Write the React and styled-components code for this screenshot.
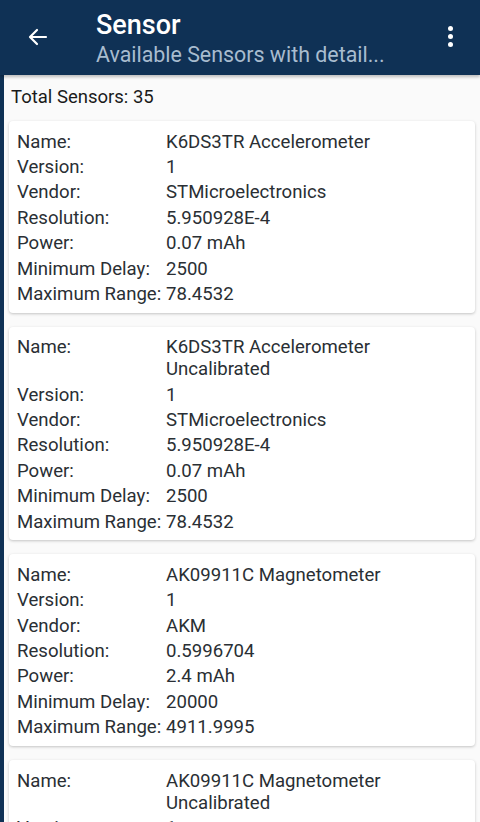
import React from "react";
import styled, { createGlobalStyle } from "styled-components";

const GlobalStyles = createGlobalStyle`
  body {
    margin: 0;
    font-family: Roboto, "Noto Sans", sans-serif;
    background: #fafafa;
  }
`;

const sensors = [
  {
    name: "K6DS3TR Accelerometer",
    version: "1",
    vendor: "STMicroelectronics",
    resolution: "5.950928E-4",
    power: "0.07 mAh",
    minDelay: "2500",
    maxRange: "78.4532",
  },
  {
    name: "K6DS3TR Accelerometer Uncalibrated",
    version: "1",
    vendor: "STMicroelectronics",
    resolution: "5.950928E-4",
    power: "0.07 mAh",
    minDelay: "2500",
    maxRange: "78.4532",
  },
  {
    name: "AK09911C Magnetometer",
    version: "1",
    vendor: "AKM",
    resolution: "0.5996704",
    power: "2.4 mAh",
    minDelay: "20000",
    maxRange: "4911.9995",
  },
  {
    name: "AK09911C Magnetometer Uncalibrated",
    version: "1",
    vendor: "AKM",
    resolution: "0.5996704",
    power: "2.4 mAh",
    minDelay: "20000",
    maxRange: "4911.9995",
  },
];

const fields = [
  ["Name:", "name"],
  ["Version:", "version"],
  ["Vendor:", "vendor"],
  ["Resolution:", "resolution"],
  ["Power:", "power"],
  ["Minimum Delay:", "minDelay"],
  ["Maximum Range:", "maxRange"],
];

function App() {
  return (
    <Page>
      <GlobalStyles />
      <Toolbar>
        <IconButton aria-label="back">
          <svg width="24" height="24" viewBox="0 0 24 24">
            <path
              d="M20 12H4.5M11 5l-7 7 7 7"
              fill="none"
              stroke="#fff"
              strokeWidth="2.2"
              strokeLinecap="round"
              strokeLinejoin="round"
            />
          </svg>
        </IconButton>
        <Titles>
          <Title>Sensor</Title>
          <Subtitle>Available Sensors with detail...</Subtitle>
        </Titles>
        <MenuButton aria-label="more">
          <Dot />
          <Dot />
          <Dot />
        </MenuButton>
      </Toolbar>
      <Body>
        <Total>Total Sensors: 35</Total>
        <List>
          {sensors.map((s, i) => (
            <Card key={i}>
              {fields.map(([label, key]) => (
                <Row key={key}>
                  <Label>{label}</Label>
                  <Value>{s[key]}</Value>
                </Row>
              ))}
            </Card>
          ))}
        </List>
      </Body>
    </Page>
  );
}

export default App;

const Page = styled.div`
  height: 822px;
  overflow: hidden;
  display: flex;
  flex-direction: column;
`;

const Toolbar = styled.header`
  height: 75px;
  flex-shrink: 0;
  background: #0f3155;
  display: flex;
  align-items: center;
  box-shadow: 0 2px 3px rgba(0, 0, 0, 0.25);
  position: relative;
  z-index: 1;
`;

const IconButton = styled.div`
  width: 96px;
  height: 75px;
  display: flex;
  align-items: center;
  padding-left: 26px;
  box-sizing: border-box;
  padding-bottom: 2px;
`;

const Titles = styled.div`
  flex: 1;
  align-self: stretch;
  display: flex;
  flex-direction: column;
  padding-top: 9px;
  white-space: nowrap;
`;

const Title = styled.div`
  color: #fff;
  font-size: 27px;
  font-weight: 500;
  line-height: 32px;
`;

const Subtitle = styled.div`
  color: #a8bccf;
  font-size: 21.4px;
  line-height: 28px;
`;

const MenuButton = styled.div`
  width: 60px;
  height: 75px;
  display: flex;
  flex-direction: column;
  align-items: center;
  justify-content: center;
  gap: 3px;
  padding-left: 1px;
  padding-bottom: 3px;
  box-sizing: border-box;
`;

const Dot = styled.span`
  width: 5px;
  height: 5px;
  border-radius: 50%;
  background: #fff;
`;

const Body = styled.main`
  flex: 1;
  border-left: 4px solid #0f3155;
  background: #fafafa;
  padding: 0 5px 0 5px;
`;

const Total = styled.div`
  font-size: 18.5px;
  color: #1a1a1a;
  padding: 10px 0 0 2px;
  line-height: 24px;
  height: 36px;
`;

const List = styled.div`
  display: flex;
  flex-direction: column;
  gap: 14px;
`;

const Card = styled.section`
  background: #fff;
  border-radius: 4px;
  box-shadow: 0 1px 3px rgba(0, 0, 0, 0.22);
  padding: 8px 8px 6px 8px;
`;

const Row = styled.div`
  display: grid;
  grid-template-columns: 149px 1fr;
  font-size: 18.6px;
  line-height: 22px;
  padding: 1.7px 0;
  color: #2a2f34;
`;

const Label = styled.span``;

const Value = styled.span``;
